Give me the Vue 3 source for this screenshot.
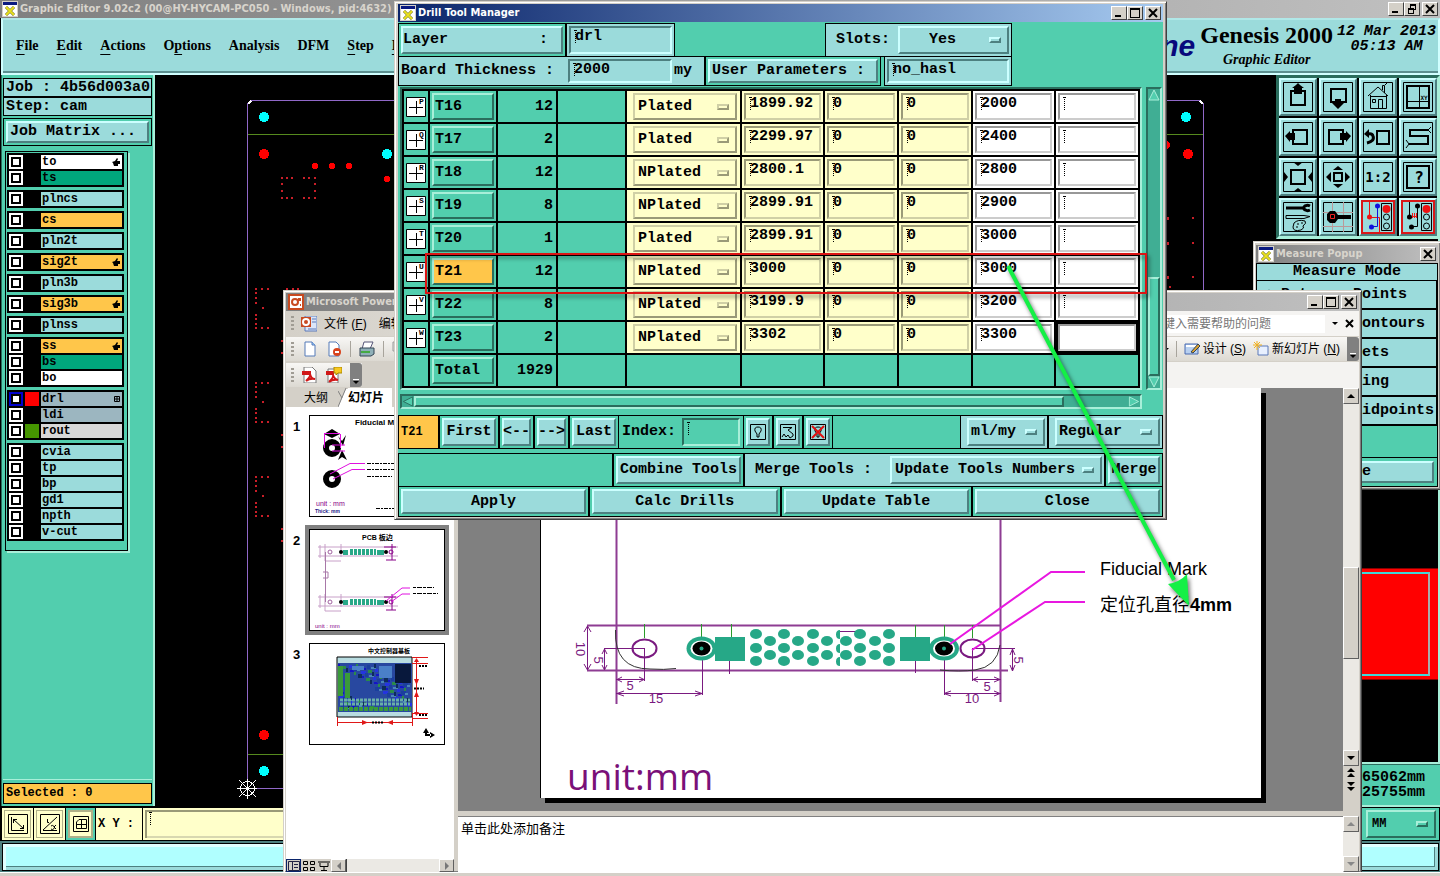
<script setup>
import { ref } from 'vue'

const menus = [
  { pre: '', key: 'F', post: 'ile' },
  { pre: '', key: 'E', post: 'dit' },
  { pre: '', key: 'A', post: 'ctions' },
  { pre: 'O', key: 'p', post: 'tions' },
  { pre: 'Analysis', key: '', post: '' },
  { pre: 'DFM', key: '', post: '' },
  { pre: '', key: 'S', post: 'tep' },
  { pre: '', key: 'H', post: 'elp' }
]

const groups = [
  [{ n: 'to', c: 'white', hand: true }, { n: 'ts', c: 'green' }],
  [{ n: 'plncs' }],
  [{ n: 'cs', c: 'amber' }],
  [{ n: 'pln2t' }],
  [{ n: 'sig2t', c: 'amber', hand: true }],
  [{ n: 'pln3b' }],
  [{ n: 'sig3b', c: 'amber', hand: true }],
  [{ n: 'plnss' }],
  [{ n: 'ss', c: 'amber', hand: true }, { n: 'bs', c: 'green' }, { n: 'bo', c: 'white' }],
  [{ n: 'drl', c: 'steel', sw: 'red', on: true, grid: true }, { n: 'ldi', c: 'steel' }, { n: 'rout', c: 'grey', sw: 'leaf' }],
  [{ n: 'cvia' }, { n: 'tp' }, { n: 'bp' }, { n: 'gd1' }, { n: 'npth' }, { n: 'v-cut' }]
]

const rows = ref([
  { s: 'P', t: 'T16', n: 12, type: 'Plated', v: '1899.92', d: '2000' },
  { s: 'Q', t: 'T17', n: 2, type: 'Plated', v: '2299.97', d: '2400' },
  { s: 'R', t: 'T18', n: 12, type: 'NPlated', v: '2800.1', d: '2800' },
  { s: 'S', t: 'T19', n: 8, type: 'NPlated', v: '2899.91', d: '2900' },
  { s: 'T', t: 'T20', n: 1, type: 'Plated', v: '2899.91', d: '3000' },
  { s: 'U', t: 'T21', n: 12, type: 'NPlated', v: '3000', d: '3000', on: true },
  { s: 'V', t: 'T22', n: 8, type: 'NPlated', v: '3199.9', d: '3200' },
  { s: 'W', t: 'T23', n: 2, type: 'NPlated', v: '3302', d: '3300', last: true }
])

const K = '#000'
const dot = (x, y, r) => `M${x - r} ${y}A${r} ${r} 0 1 0 ${x + r} ${y}A${r} ${r} 0 1 0 ${x - r} ${y}`
const lights = [
  { d: 'M18.500 1.500H28.500V28.500H18.500Z' + dot(23.5, 15, 3) + dot(23.5, 24, 3), s: K, w: 1 },
  { d: dot(23.5, 7, 4), f: '#e11' }
]
const tools = [
  { n: 'Pan up', p: [{ d: 'M8 9H22V23H8Z', s: K, w: 2 }, { d: 'M9 6L13 3L15 1L17 3L21 6H19V12H11V6Z', f: K }] },
  { n: 'Pan down', p: [{ d: 'M8 7H23V20H8Z', s: K, w: 2 }, { d: 'M12 17H18V21H21L15 27L9 21H12Z', f: K }] },
  { n: 'Home', p: [{ d: 'M5 14L15 5L25 14M7.500 13V26.500H23.500V13M7 14.500H24M9.500 17.500H12.500V20.500H9.500ZM15.500 26V17.500H19.500V26M19.500 8V3.500H21.500V11M22 3L24 1', s: K, w: 1 }] },
  { n: 'Area', p: [{ d: 'M4 4H26V26H4Z', s: K, w: 2 }, { d: 'M16.5 4V26M4 19.5H26', s: K, w: 1 }], t: 'XY', x: 21, y: 18, z: 6 },
  { n: 'Pan left', p: [{ d: 'M10 8H24V22H10Z', s: K, w: 2 }, { d: 'M2 14L7 9V11H12V18H7V20Z', f: K }] },
  { n: 'Pan right', p: [{ d: 'M6 8H20V22H6Z', s: K, w: 2 }, { d: 'M28 14L23 9V11H17V18H23V20Z', f: K }] },
  { n: 'Previous zoom', p: [{ d: 'M14 9H26V22H14Z', s: K, w: 2 }, { d: 'M4 21Q12 19 10 14Q9 11 5 12', s: K, w: 3 }, { d: 'M1 12L6 7V16Z', f: K }] },
  { n: 'Snake', p: [{ d: 'M25 8H7V14H25V22H6', s: K, w: 2 }, { d: 'M25 8L28 5M25 8L28 11M6 22L3 18M6 22L3 26', s: K, w: 1 }] },
  { n: 'Zoom in', p: [{ d: 'M8 8H22V22H8Z', s: K, w: 2 }, { d: 'M10 0H20L15 4ZM10 30H20L15 26ZM1 10V20L5 15ZM29 10V20L25 15Z', f: K }] },
  { n: 'Zoom out', p: [{ d: 'M11 11H19V19H11Z', s: K, w: 2 }, { d: 'M10 8H20L15 4ZM10 22H20L15 26ZM8 10V20L3 15ZM22 10V20L27 15Z', f: K }] },
  { n: 'Scale', p: [], t: '1:2', x: 15, y: 20, z: 14 },
  { n: 'Query', p: [{ d: 'M4 4H26V26H4Z', s: K, w: 2 }], t: '?', x: 16, y: 21, z: 16 },
  { n: 'Options', p: [{ d: 'M3 6H19M27 4Q23 2 20 6Q23 10 27 8', s: K, w: 3 }, { d: 'M3 13.500H21L27 14.500L21 16.500H3Z', s: K, w: 1 }, { d: 'M11 21Q15 17 22 19Q24 21 20 24Q22 26 18 28Q10 30 10 25ZM14 22H16M18 21H20M13 25H15', s: K, w: 1 }] },
  { n: 'Feature', p: [{ d: 'M0 10.5H30M9.5 0V30M20.5 0V30M0 24.5H30', s: '#b99', w: 1 }, { d: 'M4 12L7 9H12L15 13H28V17H15L12 21H7L4 18Z', f: K }, { d: 'M7.500 12.500H11.500V16.500H7.500Z', s: '#e22', w: 1 }] },
  { n: 'Net colours', red: true, p: [{ d: 'M6.5 0V15.500H16.500V30', s: '#e11', w: 1 }, { d: 'M14.5 5V24.500H8', s: '#11d', w: 1 }, { d: dot(6.5, 15, 2.5), f: '#e11' }, { d: dot(14.5, 4, 2.5) + dot(8.5, 25, 2.5), f: '#11d' }, ...lights] },
  { n: 'Net compare', red: true, p: [{ d: 'M6.5 0V15M14.5 4V24.500H8M6 15.500H9', s: K, w: 1 }, { d: 'M9.500 16V11M11.500 16V11M13.500 16V11M9 14.500H14', s: '#e11', w: 1 }, { d: dot(6.5, 15, 2.5) + dot(14.5, 4, 2.5) + dot(8.5, 25, 2.5), f: K }, ...lights] }
]

const modes = ['Between Points', 'Between Contours', 'Between Nets', 'Annular Ring', 'Between Midpoints']

const padOffsets = [[256, 0], [262, 0], [268, 0], [256, 4], [256, 9], [256, 14], [263, 19], [256, 26], [256, 30], [256, 35], [256, 39], [262, 39], [268, 39], [282, 52], [282, 64]]
const pads = [289, 383, 477].flatMap(y => padOffsets.map(p => [p[0], y + p[1]])).concat(
  [282, 287, 292, 304, 309, 315].flatMap(x => [[x, 178], [x, 198]]),
  [[282, 184], [282, 191], [315, 184], [315, 191], [287, 289], [293, 289], [298, 289]]
)

const holes = [634, 648, 661].flatMap(y => [756, 784, 813, 860, 889].map(x => [x, y])).concat(
  [641, 655].flatMap(y => [770, 798, 827, 846, 875].map(x => [x, y]))
)

const comps = Array.from({ length: 90 }, (_, i) => ({
  x: 28 + (i * 37) % 70,
  y: 20 + (i * 23) % 44,
  w: 2 + (i * 7) % 4,
  h: 2 + (i * 5) % 3,
  c: ['#1414c8', '#1b3f9e', '#2a8a4a', '#4a86b8', '#0d2c5c', '#2434e0'][i % 6]
}))
</script>

<template>
  <div class="desktop">
    <svg class="defs" aria-hidden="true">
      <symbol id="logo-x" viewBox="0 0 16 16">
        <path d="M0 0H16V16H0Z" fill="#d4d0c8" /><path d="M1 1H15V15H1Z" fill="#fff" />
        <path d="M1 1H15V4H1Z" fill="#0a1a80" /><path d="M4 6L12 14M12 6L4 14" stroke="#6a6a20" stroke-width="3" />
        <path d="M4 6L12 14M12 6L4 14" stroke="#e8e020" stroke-width="2" />
      </symbol>
      <symbol id="w-min" viewBox="0 0 12 10"><path d="M2 7H8V9H2Z" /></symbol>
      <symbol id="w-max" viewBox="0 0 12 10"><path d="M1 0H11V10H1ZM2 2V9H10V2Z" fill-rule="evenodd" /></symbol>
      <symbol id="w-res" viewBox="0 0 12 10"><path d="M4 0H10V6H8V10H2V4H4ZM5 2V4H8V5H9V2ZM3 6V9H7V6Z" fill-rule="evenodd" /></symbol>
      <symbol id="w-close" viewBox="0 0 12 10"><path d="M2 1L10 9M10 1L2 9" stroke="#000" stroke-width="2" /></symbol>
    </svg>

    <!-- Graphic editor -->
    <main class="editor">
      <header class="bar idle">
        <svg class="logo"><use href="#logo-x" /></svg>
        <h1>Graphic Editor 9.02c2 (00@HY-HYCAM-PC050 - Windows, pid:4632)</h1>
        <span class="wb">
          <button aria-label="Minimize editor"><svg><use href="#w-min" /></svg></button>
          <button aria-label="Restore editor"><svg><use href="#w-res" /></svg></button>
          <button class="gap" aria-label="Close editor"><svg><use href="#w-close" /></svg></button>
        </span>
      </header>

      <div class="head">
        <nav class="menu">
          <button v-for="m in menus" :key="m.pre + m.key + m.post">{{ m.pre }}<u v-if="m.key">{{ m.key }}</u>{{ m.post }}</button>
        </nav>
        <span class="brand">Frontline</span>
        <div class="product"><strong>Genesis 2000</strong><em>Graphic Editor</em></div>
        <div class="date">12 Mar 2013<br>05:13 AM</div>
      </div>

      <div class="work">
        <aside class="side">
          <div class="info">Job : 4b56d003a0</div>
          <div class="info">Step: cam</div>
          <div class="frame"><button class="btn wide">Job Matrix ...</button></div>
          <div class="layers">
            <div v-for="(g, i) in groups" :key="i" class="group">
              <label v-for="l in g" :key="l.n" class="layer">
                <input type="checkbox" :class="{ on: l.on }">
                <span class="swatch" :class="l.sw"></span>
                <span class="name" :class="l.c">{{ l.n }}
                  <svg v-if="l.hand" width="8" height="8" viewBox="0 0 8 8"><path d="M0 4L3 3L5 0L6 1L5 3H8V6H6V8H2L1 5Z" /></svg>
                  <svg v-if="l.grid" width="6" height="6" viewBox="0 0 6 6"><path d="M.5.5H5.500V5.500H.5ZM3 0V6M0 3H6" fill="none" stroke="#000" /></svg>
                </span>
              </label>
            </div>
          </div>
          <div class="selected">Selected : 0</div>
        </aside>

        <div class="canvas">
          <svg viewBox="155 75 1121 732" preserveAspectRatio="xMinYMin slice" shape-rendering="crispEdges">
            <path d="M247.5 788V104L251 100.500H1200L1203.500 104V788.500H247" fill="none" stroke="#9068c8" />
            <path d="M248 104L251 101M1200 101L1203 104" stroke="#fff" stroke-width="2" />
            <path d="M248 134.500H1203M248 754.500H1203" stroke="#568a1e" />
            <g fill="#0ff"><circle cx="264" cy="117" r="5" /><circle cx="387" cy="154" r="5" /><circle cx="264" cy="771" r="5" /><circle cx="1186" cy="117" r="5" /></g>
            <g fill="#f00">
              <circle cx="264" cy="154" r="5" /><circle cx="264" cy="735" r="5" /><circle cx="1188" cy="154" r="5" /><circle cx="1166" cy="145" r="4" />
              <circle cx="315" cy="166" r="3" /><circle cx="332" cy="166" r="3" /><circle cx="349" cy="166" r="3" /><circle cx="387" cy="179" r="3" />
            </g>
            <g fill="#c81e28">
              <rect v-for="(p, i) in pads" :key="i" :x="p[0] - 1" :y="p[1] - 1" width="2" height="2" />
              <rect v-for="y in [217, 242, 276]" :key="y" x="1192" :y="y" width="2" height="2" />
              <rect v-for="y in [217, 242, 276]" :key="'b' + y" x="1166" :y="y" width="3" height="3" />
              <rect x="1169" y="286" width="2" height="2" />
            </g>
            <g fill="none" stroke="#fff"><circle cx="247.500" cy="788.500" r="7" /><path d="M237 788.500H257M247.500 779V799M239 780L256 797M256 780L239 797" /></g>
          </svg>
        </div>

        <aside class="right">
          <div class="tools">
            <button v-for="t in tools" :key="t.n" class="tool" :class="{ alert: t.red }" :aria-label="t.n">
              <svg viewBox="0 0 30 30" width="30" height="30">
                <path d="M.5 .5H29.500V29.500H.5Z" fill="none" :stroke="t.red ? 'none' : '#000'" />
                <path v-for="(p, i) in t.p" :key="i" :d="p.d" :fill="p.f || 'none'" :stroke="p.s || 'none'" :stroke-width="p.w || 0" />
                <text v-if="t.t" :x="t.x" :y="t.y" :font-size="t.z" text-anchor="middle">{{ t.t }}</text>
              </svg>
            </button>
          </div>
          <div class="overview"><div class="red-box"><i></i></div></div>
          <div class="coords"><span>X: 0.165062mm</span><span>Y: 0.225755mm</span></div>
        </aside>
      </div>

      <div class="entry">
        <button class="cream" aria-label="Vector mode"><svg width="20" height="20" viewBox="0 0 20 20"><path d="M.5.5H19.500V19.500H.5ZM3.500 3V16.500H16M5 5L16 15M5.500 9V5.500H9M15.500 11V14.500H12" /></svg></button>
        <button class="cream" aria-label="Angle mode"><svg width="20" height="20" viewBox="0 0 20 20"><path d="M.5.5H19.500V19.500H.5ZM3 16L17 3M3 16.500H17M7.500 5V8.500H9M11 12A2 2 0 1 1 11 15M16 11L14 13L16 15" /></svg></button>
        <button class="cream sel" aria-label="Grid snap"><svg width="16" height="16" viewBox="0 0 16 16"><path d="M.5.5H15.500V15.500H.5ZM3.500 6L6 3.500H13.500V12.500H3.500ZM8.500 3V13M3 8.500H13" /></svg></button>
        <label class="xy" for="xy">X Y :</label>
        <div class="xyin"><i class="beam"></i><input id="xy" type="text"></div>
        <div class="unit"><div class="opt greenopt"><select aria-label="Units"><option>MM</option></select><i></i></div></div>
      </div>
      <div class="message"><div></div></div>
      <footer class="strip"></footer>
    </main>

    <!-- Measure popup -->
    <section class="win measure">
      <header class="bar idle">
        <svg class="logo"><use href="#logo-x" /></svg><h2>Measure Popup</h2>
        <span class="wb"><button aria-label="Close measure"><svg><use href="#w-close" /></svg></button></span>
      </header>
      <div class="mbody">
        <h3>Measure Mode</h3>
        <label v-for="m in modes" :key="m"><input type="radio" name="mode">{{ m }}</label>
        <div class="mclose"><div class="frame"><button class="btn">Close</button></div></div>
      </div>
    </section>

    <!-- Presentation window -->
    <section class="win ppt">
      <header class="bar idle">
        <svg class="plogo" viewBox="0 0 16 16"><path d="M0 0H16V16H0Z" fill="#c84a20" /><path d="M2 2H14V14H2Z" fill="#fff" /><circle cx="7" cy="8" r="3" fill="none" stroke="#c84a20" stroke-width="2" /><path d="M10 4H13V7H10ZM12 10H13V12H12Z" fill="#c84a20" /></svg>
        <h2>Microsoft PowerPoint</h2>
        <span class="wb">
          <button aria-label="Minimize presentation"><svg><use href="#w-min" /></svg></button>
          <button aria-label="Maximize presentation"><svg><use href="#w-max" /></svg></button>
          <button class="gap" aria-label="Close presentation"><svg><use href="#w-close" /></svg></button>
        </span>
      </header>
      <div class="pmenu">
        <i class="grip"></i>
        <svg class="plogo" viewBox="0 0 16 16"><path d="M4 0H16V15H4Z" fill="#dce6f8" stroke="#5a78b8" /><path d="M11 3H15M11 6H15M7 13H15" stroke="#5a78b8" /><path d="M0 1H10V11H0Z" fill="#c84a20" /><circle cx="5" cy="6" r="3" fill="none" stroke="#fff" stroke-width="2" /></svg>
        <button>文件 (<u>F</u>)</button><button>编辑 (<u>E</u>)</button>
        <input class="help" type="text" placeholder="键入需要帮助的问题" aria-label="帮助">
        <span class="drop"></span>
        <button class="x" aria-label="Close file"><svg width="9" height="9" viewBox="0 0 9 9"><path d="M1 1L8 8M8 1L1 8" stroke="#000" stroke-width="2" /></svg></button>
      </div>
      <div class="ptools">
        <div class="strip1">
          <i class="grip"></i>
          <button aria-label="New"><svg width="16" height="16" viewBox="0 0 16 16"><path d="M3 1H10L13 4V15H3Z" fill="#fff" stroke="#557ab8" /><path d="M10 1V4H13" fill="#9cf" stroke="#557ab8" /></svg></button>
          <button aria-label="Permission"><svg width="16" height="16" viewBox="0 0 16 16"><path d="M3 1H10L13 4V15H3Z" fill="#fff" stroke="#557ab8" /><circle cx="11" cy="11" r="4" fill="#d8431c" /><path d="M9 11H13" stroke="#fff" stroke-width="2" /></svg></button>
          <i class="sep"></i>
          <button aria-label="Print"><svg width="16" height="16" viewBox="0 0 16 16"><path d="M5 1H14L11 8H3Z" fill="#fff" stroke="#557" /><path d="M1 7H15V13L12 15H1Z" fill="#8fb0b8" stroke="#345" /><path d="M2 11H11" stroke="#4a4" stroke-width="2" /></svg></button>
          <i class="sep"></i>
          <button aria-label="Copy"><svg width="16" height="16" viewBox="0 0 16 16"><path d="M1 1H8V10H1ZM6 5H14V15H6Z" fill="#ddd" stroke="#999" /><path d="M8 8H12M8 10H12M8 12H12" stroke="#aaa" /></svg></button>
        </div>
        <div class="strip1 end">
          <span class="drop"></span><i class="sep"></i>
          <button><svg width="16" height="16" viewBox="0 0 16 16"><path d="M1 3H14V13H1Z" fill="#b8d0f0" stroke="#4a6ab0" /><path d="M2 4H13V6H2Z" fill="#fff" /><path d="M7 11L14 3L16 5L9 12Z" fill="#d8a030" stroke="#345" /></svg><span>设计 (<u>S</u>)</span></button>
          <button><svg width="16" height="16" viewBox="0 0 16 16"><path d="M5 5H15V14H5Z" fill="#e8f0ff" stroke="#5a78b8" /><path d="M4 0V9M0 4H9M1 1L7 7M7 1L1 7" stroke="#f0b020" /></svg><span>新幻灯片 (<u>N</u>)</span></button>
          <i class="more"></i>
        </div>
      </div>
      <div class="ptools second">
        <div class="strip1">
          <i class="grip"></i>
          <button aria-label="PDF"><svg width="16" height="16" viewBox="0 0 16 16"><path d="M2 0H10L14 4V16H2Z" fill="#fff" stroke="#777" /><path d="M0 4H9V8H0Z" fill="#d01818" /><path d="M4 14Q9 9 8 7Q9 12 13 12Q8 11 4 14" fill="none" stroke="#d01818" stroke-width="2" /></svg></button>
          <button aria-label="PDF review"><svg width="16" height="16" viewBox="0 0 16 16"><path d="M2 2H12V16H2Z" fill="#fff" stroke="#777" /><path d="M0 4H8V8H0Z" fill="#d01818" /><path d="M3 15Q8 10 7 8Q8 12 12 13Q7 12 3 15" fill="none" stroke="#d01818" stroke-width="2" /><path d="M8 0H16V6H12L10 8V6H8Z" fill="#f8c820" stroke="#a80" /></svg></button>
          <i class="more"></i>
        </div>
      </div>

      <div class="pbody">
        <div class="outline">
          <div class="tabs"><button>大纲</button><svg width="10" height="19" viewBox="0 0 10 19"><path d="M10 0V19H0L8 1H10Z" fill="#fff" /><path d="M0 19L8 0M0 3L4 10" stroke="#808080" fill="none" /></svg><button class="act">幻灯片</button></div>
          <ol class="thumbs">
            <li><b>1</b>
              <div class="thumb"><svg viewBox="0 0 134 100">
                <text x="45" y="9" font-size="8" font-weight="bold">Fiducial  Mark</text>
                <circle cx="22" cy="32" r="6" fill="none" stroke="#000" stroke-width="6" /><circle cx="22" cy="63" r="6" fill="none" stroke="#000" stroke-width="6" />
                <path d="M14 18L22 13L30 18L22 22ZM28 20L32 25L36 19L33 30ZM32 34L37 44L32 41L28 44Z" />
                <path d="M14.500 18V32M30.500 18V32M14 17.500H30M22 29H35M22 35H35M20 58L40 47.500H55M23 63L42 53.500H55" stroke="#e010e0" fill="none" />
                <path d="M57 47.500H84M57 53.500H84M57 60.500H82M66 92.500H84" stroke="#000" stroke-dasharray="4 1 2 1" />
                <text x="6" y="90" font-size="7" fill="#808">unit : mm</text><text x="5" y="97" font-size="5" font-weight="bold" fill="#228">Thick: mm</text>
              </svg></div></li>
            <li class="cur"><b>2</b>
              <div class="thumb"><svg viewBox="0 0 134 100">
                <text x="52" y="10" font-size="7" font-weight="bold">PCB 板边</text>
                <g v-for="y in [22, 72]" :key="y">
                  <path :d="`M8 ${y - 5}H88M8 ${y + 4}H88M10 ${y - 7}V${y + 6}M15 ${y - 8}V${y + 9}M31 ${y - 8}V${y + 5}M15 ${y + 9}H31`" stroke="#c8a0c8" fill="none" />
                  <circle cx="20" :cy="y" r="2" stroke="#a060a0" fill="none" /><circle cx="31" :cy="y" r="2" /><circle cx="76" :cy="y" r="2" />
                  <path :d="`M33 ${y - 2}H38V${y + 3}H33ZM67 ${y - 2}H74V${y + 3}H67Z`" fill="#28a888" />
                  <path :d="`M40 ${y}H66`" stroke="#28a888" stroke-width="6" stroke-dasharray="3 1" />
                  <circle cx="81" :cy="y" r="2" fill="none" stroke="#808" /><path :d="`M74 ${y - 5}H86M76 ${y + 8}H86M82 ${y - 8}V${y + 8}`" stroke="#808" />
                </g>
                <path d="M15.500 22V72M13 42H18V48H13" stroke="#a878a8" fill="none" />
                <path d="M76 71L92 58H100M81 72L92 64H100" stroke="#e010e0" fill="none" />
                <path d="M103 57.500H124M103 63.500H128" stroke="#000" stroke-dasharray="3 1 5 1" />
                <text x="5" y="98" font-size="6" fill="#808">unit : mm</text>
              </svg></div></li>
            <li><b>3</b>
              <div class="thumb"><svg viewBox="0 0 134 100">
                <text x="58" y="9" font-size="6" font-weight="bold">中文控制器基板</text>
                <path d="M27 13H102V73H27Z" fill="#b8dce0" stroke="#000" /><path d="M28 19H102V68H28Z" fill="#2848a0" />
                <rect v-for="(c, i) in comps" :key="i" :x="c.x" :y="c.y" :width="c.w" :height="c.h" :fill="c.c" />
                <path d="M28 22H33V52H28ZM35 29H40V54H35Z" fill="#3a9a3a" /><path d="M30 56H100M30 60H100" stroke="#6ab0a8" stroke-width="3" stroke-dasharray="3 1" /><path d="M29 65H101" stroke="#3a9a3a" stroke-width="4" stroke-dasharray="4 1" />
                <path d="M85 20H101V39H85Z" fill="#08183c" /><path d="M42 22H54V26H42ZM69 22H82V34H69Z" fill="#4a80c8" />
                <path d="M27.500 73V82M102.500 70V82M28 78.500H102M106.500 16V68M102 13.500H118M102 19.500H118M102 69.500H118M102 74.500H118" stroke="#e01818" />
                <path d="M58 78.500L52 76V81ZM77 78.500L83 76V81ZM106.500 41L104 35H109ZM106.500 47L104 53H109ZM106.500 72L104 68H109ZM106.500 14L104 18H109Z" fill="#e01818" />
                <path d="M62 78.500H74M104 44.500H114M109 22H118M109 71H117" stroke="#000" stroke-width="2" stroke-dasharray="2 1" />
                <path d="M116 84L113 89H119ZM125 91L120 88V94ZM115 89H117V90H121V92H115Z" />
              </svg></div></li>
          </ol>
          <div class="views">
            <button class="on" aria-label="Normal view"><svg width="12" height="10" viewBox="0 0 12 10"><path d="M.5.5H11.500V9.500H.5ZM4.500 0V10M6 3.500H10M6 6.500H10" fill="none" stroke="#224" /></svg></button>
            <button aria-label="Slide sorter"><svg width="12" height="10" viewBox="0 0 12 10"><path d="M.5.5H4.500V3.500H.5ZM7.500.5H11.500V3.500H7.500ZM.5 6.500H4.500V9.500H.5ZM7.500 6.500H11.500V9.500H7.500Z" fill="none" stroke="#000" /></svg></button>
            <button aria-label="Slide show"><svg width="12" height="10" viewBox="0 0 12 10"><path d="M0 1H12M2 2V5.500H10V2M6 6V10M3 9.500H9" fill="none" stroke="#000" /></svg></button>
            <button class="sb left" aria-label="Scroll left"></button><i class="trk"></i><button class="sb rightb" aria-label="Scroll right"></button>
          </div>
        </div>

        <div class="stage">
          <div class="slidearea">
            <div class="slidewrap">
              <div class="slide">
                <svg viewBox="541 388 720 410">
                  <g fill="none" stroke="#7a1a80">
                    <path d="M616.500 388V704M1000.500 388V702M587 625.500H1000M587 670.500H1008" stroke-width="2" stroke-opacity=".85" />
                    <path d="M587.500 626V670M604.500 649V670M604 648.500H645M644.500 648V681M616 679.500H645M616 693.500H702M702.500 655V695M729.500 660V674M915.500 660V673M944.500 660V695M944 693.500H1001M972.500 648V681M972 679.500H1001M972 648.500H1015M1012.500 649V671M840 631.500H862" stroke-width="1" />
                    <path d="M584 632L587.500 626L591 632M584 664L587.500 670L591 664M602 654L604.500 649L607 654M602 665L604.500 670L607 665M622 677L617 679.500L622 682M639 677L644 679.500L639 682M624 691L617 693.500L624 696M695 691L702 693.500L695 696M951 691L944 693.500L951 696M994 691L1000 693.500L994 696M978 677L973 679.500L978 682M994 677L1000 679.500L994 682M1010 655L1012.500 649L1015 655M1010 665L1012.500 671L1015 665" />
                    <ellipse cx="644.500" cy="648.500" rx="12" ry="9" stroke-width="2" /><ellipse cx="972.500" cy="648.500" rx="12" ry="9" stroke-width="2" />
                  </g>
                  <path d="M615.500 630Q614 669 650 669Q664 670 676 668.500M1000 645Q997 667 975 670Q960 672 940 670" fill="none" stroke="#333" />
                  <path d="M644.500 624V638M701.500 624V638M731.500 624V638M915.500 625V638M944.500 625V638M972.500 625V638" stroke="#2a9a2a" />
                  <g fill="#26a887">
                    <path d="M715 637H745V661H715ZM900 637H930V661H900ZM840 630Q836 630 836 634.500Q836 639 840 639ZM840 644Q836 644 836 648.500Q836 653 840 653ZM840 657Q836 657 836 661.500Q836 666 840 666Z" />
                    <ellipse v-for="(h, i) in holes" :key="i" :cx="h[0]" :cy="h[1]" rx="6" ry="5" />
                  </g>
                  <g v-for="x in [701.5, 944]" :key="x">
                    <ellipse :cx="x" cy="648.500" rx="15" ry="12" fill="#26a887" /><ellipse :cx="x" cy="648.500" rx="11" ry="8" fill="#fff" />
                    <ellipse :cx="x" cy="648.500" rx="9" ry="7" fill="#000" /><circle :cx="x" cy="648.500" r="2" fill="#26a887" />
                  </g>
                  <g font-size="13" fill="#7a1a80" text-anchor="middle">
                    <text x="630" y="690">5</text><text x="656" y="703">15</text><text x="972" y="703">10</text><text x="987" y="691">5</text>
                    <text transform="translate(576 649) rotate(90)">10</text><text transform="translate(594 660) rotate(90)">5</text><text transform="translate(1014 660) rotate(90)">5</text>
                  </g>
                  <path d="M950 644L1051 572H1085M972 650L1045 602H1085" fill="none" stroke="#e818e0" stroke-width="2" />
                  <g font-size="18"><text x="1100" y="575" class="keep">Fiducial  Mark</text><text x="1100" y="611">定位孔直径<tspan font-weight="bold">4mm</tspan></text></g>
                  <text class="unitmm" x="567" y="790" font-size="37" fill="#7a1078">unit:mm</text>
                </svg>
              </div>
            </div>
            <div class="vscroll">
              <button class="sb up" aria-label="Scroll up"></button>
              <div class="track"><div class="thumbbar"></div></div>
              <button class="sb down" aria-label="Scroll down"></button>
              <button class="sb dbl" aria-label="Previous slide"><svg width="10" height="10" viewBox="0 0 10 10"><path d="M5 0L9 4H1ZM5 5L9 9H1Z" /></svg></button>
              <button class="sb dbl" aria-label="Next slide"><svg width="10" height="10" viewBox="0 0 10 10"><path d="M1 0H9L5 4ZM1 5H9L5 9Z" /></svg></button>
            </div>
          </div>
          <div class="notes">
            <textarea aria-label="Notes">单击此处添加备注</textarea>
            <div class="vscroll"><button class="sb up dim" aria-label="Notes up"></button><div class="track"></div><button class="sb down dim" aria-label="Notes down"></button></div>
          </div>
        </div>
      </div>
    </section>

    <!-- Drill tool manager -->
    <section class="win drill">
      <header class="bar live">
        <svg class="logo"><use href="#logo-x" /></svg><h2>Drill Tool Manager</h2>
        <span class="wb">
          <button aria-label="Minimize drill"><svg><use href="#w-min" /></svg></button>
          <button aria-label="Maximize drill"><svg><use href="#w-max" /></svg></button>
          <button class="gap" aria-label="Close drill"><svg><use href="#w-close" /></svg></button>
        </span>
      </header>
      <div class="dbody">
        <div class="drow r1">
          <div class="cell w168"><button class="btn spread"><span>Layer</span><span>:</span></button></div>
          <div class="cell aqua w109"><div class="inp"><i class="beam"></i><input aria-label="Layer" value="drl"></div></div>
          <span class="space151"></span>
          <div class="cell aqua w187"><label for="slots">Slots:</label><div class="opt aquaopt yes"><select id="slots"><option>Yes</option></select><i></i></div></div>
        </div>
        <div class="drow r2">
          <div class="cell aqua w307"><label for="thick">Board Thickness :</label><div class="inp w104"><i class="beam"></i><input id="thick" value="2000"></div><span>my</span></div>
          <div class="cell w176"><button class="btn wide">User Parameters :</button></div>
          <span class="space3"></span>
          <div class="cell aqua w128"><div class="inp"><i class="beam"></i><input aria-label="User parameters" value="no_hasl"></div></div>
        </div>

        <div class="sheet">
          <div class="tframe">
            <table>
              <colgroup><col v-for="(c, i) in 10" :key="i" :class="'c' + i"></colgroup>
              <tbody>
                <tr v-for="r in rows" :key="r.t">
                  <td class="sym"><svg width="20" height="20" viewBox="0 0 20 20"><path d="M.5.5H19.500V19.500H.5Z" fill="#fff" stroke="#000" /><path d="M3 10.500H17M10.500 4V17" stroke="#000" /><text x="13" y="7" font-size="8">{{ r.s }}</text></svg></td>
                  <td><button class="gbtn" :class="{ hot: r.on }">{{ r.t }}</button></td>
                  <td class="num">{{ r.n }}</td>
                  <td></td>
                  <td class="cr"><div class="opt creamopt"><select :aria-label="r.t + ' type'"><option>{{ r.type }}</option></select><i></i></div></td>
                  <td class="cr"><div class="inp"><i class="beam"></i><input v-model="r.v" :aria-label="r.t + ' finish'"></div></td>
                  <td class="cr"><div class="inp"><i class="beam"></i><input value="0" :aria-label="r.t + ' plus'"></div></td>
                  <td class="cr"><div class="inp"><i class="beam"></i><input value="0" :aria-label="r.t + ' minus'"></div></td>
                  <td class="wh"><div class="inp"><i class="beam"></i><input v-model="r.d" :aria-label="r.t + ' drill'"></div></td>
                  <td class="wh" :class="{ focus: r.last }"><div class="inp"><i v-if="!r.last" class="beam"></i><input :aria-label="r.t + ' designator'"></div></td>
                </tr>
                <tr>
                  <td></td><td><button class="gbtn">Total</button></td><td class="num">1929</td>
                  <td></td><td></td><td></td><td></td><td></td><td></td><td></td>
                </tr>
              </tbody>
            </table>
          </div>
          <div class="mvs">
            <svg width="12" height="12" viewBox="0 0 12 12"><path d="M6 1L11 11H1Z" fill="#52ceae" stroke="#a8efd9" /></svg>
            <div class="mtrack"><div class="mthumb"></div></div>
            <svg width="12" height="12" viewBox="0 0 12 12"><path d="M6 11L1 1H11Z" fill="#52ceae" stroke="#a8efd9" /></svg>
          </div>
          <div class="mhs">
            <svg width="12" height="11" viewBox="0 0 12 12"><path d="M1 6L11 1V11Z" fill="#52ceae" stroke="#2a6d5d" /></svg>
            <div class="htrack"><div class="hthumb"></div></div>
            <svg width="12" height="11" viewBox="0 0 12 12"><path d="M11 6L1 1V11Z" fill="#52ceae" stroke="#a8efd9" /></svg>
          </div>
        </div>

        <div class="drow nav">
          <div class="cell amber w41">T21</div>
          <div class="cell w60"><button class="btn">First</button></div>
          <div class="cell w35"><button class="btn">&lt;--</button></div>
          <div class="cell w35"><button class="btn">--&gt;</button></div>
          <div class="cell w50"><button class="btn">Last</button></div>
          <div class="cell idx"><label for="idx">Index:</label><div class="inp ginp"><i class="beam"></i><input id="idx"></div></div>
          <div class="cell w30"><button class="btn" aria-label="Highlight"><svg width="16" height="16" viewBox="0 0 16 16"><path d="M.5.5H15.500V15.500H.5ZM8 3Q12 3 11 7L9 10V13H7V10L5 7Q4 3 8 3" /></svg></button></div>
          <div class="cell w30"><button class="btn" aria-label="Select"><svg width="16" height="16" viewBox="0 0 16 16"><path d="M.5.5H15.500V15.500H.5ZM3 3.500H12L8 6L13 10V12M2 13L4 10L6 13L8 11L10 14L13 12" /></svg></button></div>
          <div class="cell w30"><button class="btn" aria-label="Clear"><svg width="16" height="16" viewBox="0 0 16 16"><path d="M.5.5H15.500V15.500H.5ZM5 7Q4 3 8 3Q12 3 11 7L9 10V13H7V10Z" /><path d="M2 2L14 14M14 2L2 14" stroke="#e01010" stroke-width="2" /></svg></button></div>
          <div class="cell grow"></div>
          <div class="cell aqua w88 po"><div class="opt aquaopt"><select aria-label="Tool units"><option>ml/my</option></select><i></i></div></div>
          <div class="cell aqua w115 po"><div class="opt aquaopt"><select aria-label="Mode"><option>Regular</option></select><i></i></div></div>
        </div>

        <div class="drow merge">
          <div class="cell grow"></div>
          <div class="cell w130"><button class="btn">Combine Tools</button></div>
          <div class="cell aqua w362"><label for="merge">Merge Tools :</label><div class="opt aquaopt upd"><select id="merge"><option>Update Tools Numbers</option></select><i></i></div></div>
          <div class="cell w58"><button class="btn">Merge</button></div>
        </div>
        <div class="drow acts">
          <div v-for="a in ['Apply', 'Calc Drills', 'Update Table', 'Close']" :key="a" class="cell grow"><button class="btn">{{ a }}</button></div>
        </div>
      </div>
    </section>

    <!-- Callout marks over the windows -->
    <svg class="marks" viewBox="0 0 1440 876" preserveAspectRatio="xMinYMin meet" aria-hidden="true">
      <path class="box" d="M426 254H1146V293H426Z" fill="none" stroke="#dc1414" stroke-width="2" />
      <g class="arrow"><path d="M1008 266L1174 580" stroke="#14f046" stroke-width="4" /><path d="M1189 606L1168 584Q1180 582 1187 574Z" fill="#14f046" /></g>
    </svg>
  </div>
</template>

<style>
html, body { height: 100%; overflow: hidden; background: #000; }
</style>

<style scoped>
* { box-sizing: border-box; }
.desktop { position: relative; height: 100vh; overflow: hidden; font: bold 15px/18px "Liberation Mono", monospace; color: #000; }
.defs { position: absolute; width: 0; height: 0; }
button, input, select, textarea { font: inherit; color: inherit; margin: 0; padding: 0; border: 0; border-radius: 0; background: none; outline: 0; min-width: 0; white-space: nowrap; }
select { appearance: none; width: 100%; height: 100%; }
h1, h2, h3, ol { margin: 0; padding: 0; }
svg { display: block; flex: none; }

.bar { display: flex; align-items: center; height: 18px; flex: none; gap: 2px; padding: 0 2px; font: bold 11px/18px "DejaVu Sans Condensed", "DejaVu Sans", sans-serif; }
.bar h1, .bar h2 { font: inherit; flex: 1; overflow: hidden; white-space: nowrap; }
.idle { background: linear-gradient(90deg, #808080, #c0c0c0); color: #d8d4cc; }
.live { background: linear-gradient(90deg, #0a246a, #a6caf0); color: #fff; }
.logo, .plogo { width: 16px; height: 16px; }
.wb { display: flex; }
.wb button { width: 16px; height: 14px; display: grid; place-items: center; background: #d4d0c8; border: 1px solid; border-color: #fff #404040 #404040 #fff; }
.wb svg { width: 12px; height: 10px; }
.wb .gap { margin-left: 2px; }

.editor { height: 100%; display: flex; flex-direction: column; background: #000; }
.head { flex: none; height: 57px; display: flex; align-items: center; margin-left: 1px; background: #9bdbdb; border: 2px solid #d0ffff; border-top-color: #b0e8e8; box-shadow: inset 0 -2px #5c9090; padding: 0 2px 2px 13px; }
.menu { display: flex; gap: 18px; font: bold 14px/20px "Liberation Serif", serif; flex: 1; }
.menu u { text-underline-offset: 4px; }
.brand { font: italic bold 30px/30px "Liberation Sans", sans-serif; color: #08087c; margin-right: 5px; }
.product { display: flex; flex-direction: column; align-items: center; font-family: "Liberation Serif", serif; margin-right: 4px; }
.product strong { font-size: 24px; line-height: 28px; }
.product em { font-size: 14px; line-height: 22px; }
.date { font-style: italic; line-height: 15px; text-align: center; align-self: flex-start; padding-top: 4px; }

.work { flex: 1; display: flex; min-height: 0; }
.side { width: 154px; margin-left: 1px; flex: none; display: flex; flex-direction: column; background: #52ceae; border-right: 2px solid #a8efd9; border-left: 1px solid #2a6d5d; padding: 3px 1px 2px 1px; margin-bottom: 1px; }
.info { height: 19px; line-height: 18px; background: #9bdbdb; border: 1px solid #000; padding-left: 2px; }
.frame { border: 1px solid #000; padding: 2px; background: #52ceae; }
.side .frame { height: 28px; margin-top: 2px; flex: none; }
.btn { display: flex; align-items: center; justify-content: center; width: 100%; height: 100%; background: #9bdbdb; border: 2px solid; border-color: #ccffff #4d8080 #4d8080 #ccffff; }
.wide { justify-content: flex-start; padding-left: 2px; }
.layers { display: flex; flex-direction: column; gap: 3px; width: 123px; margin: 5px 0 0 2px; padding: 1px 2px 9px 1px; border: 1px solid #000; box-shadow: 2px 2px #a8efd9; font-size: 12px; line-height: 14px; }
.group { background: #000; padding: 2px; display: flex; flex-direction: column; gap: 2px; margin-right: 1px; }
.layer { display: grid; grid-template-columns: 14px 14px 1fr; gap: 2px; height: 14px; }
.layer input { appearance: none; width: 14px; height: 14px; border: 2px solid #fff; background: #fff; box-shadow: inset 0 0 0 2px #000; }
.layer input.on { border-color: #00c; }
.red { background: #f00; }
.leaf { background: #469600; }
.name { background: #9bdbdb; display: flex; align-items: center; justify-content: space-between; padding: 0 2px 0 1px; }
.name.white { background: #fff; }
.name.green { background: #00a67c; }
.name.amber, .amber { background: #ffc64a; }
.name.steel { background: #9cb6c0; }
.name.grey { background: #d8d8d8; }
.selected { margin-top: auto; height: 21px; line-height: 18px; background: #ffc64a; border: 1px solid #000; padding-left: 2px; font-size: 12px; box-shadow: 0 -3px #52ceae, 0 -4px #a8efd9; }
.canvas { flex: 1; min-width: 0; overflow: hidden; }
.canvas svg { width: 100%; height: 100%; }
.right { width: 164px; flex: none; display: flex; flex-direction: column; }
.tools { display: grid; grid-template-columns: repeat(4, 38px); gap: 2px; background: #000; border: 3px solid #2a6d5d; border-right-color: #a8efd9; border-bottom-color: #a8efd9; }
.tool { width: 38px; height: 38px; display: grid; place-items: center; background: #9bdbdb; border: 2px solid; border-color: #ccffff #4d8080 #4d8080 #ccffff; }
.tool.alert { box-shadow: inset 0 0 0 2px #d81818; }
.tool text { font-family: "DejaVu Sans Mono", monospace; font-weight: bold; }
.overview { flex: 1; display: flex; align-items: flex-end; border-right: 2px solid #a8efd9; border-bottom: 2px solid #a8efd9; padding-bottom: 82px; }
.red-box { width: 100%; height: 112px; background: #f00; border-block: 1px solid #800; padding: 3px 8px 3px 0; }
.red-box i { display: block; height: 100%; border: 2px solid #40d8d8; border-right-color: #aaa; }
.coords { height: 43px; flex: none; background: #52ceae; border-top: 1px solid #2a6d5d; border-bottom: 2px solid #a8efd9; display: flex; flex-direction: column; justify-content: center; align-items: flex-end; padding-right: 15px; line-height: 15px; }

.entry { flex: none; height: 34px; display: flex; padding: 1px 0 1px 2px; gap: 1px; background: #000; }
.cream, .xy, .xyin { background: #ffffca; }
.cream { width: 31px; display: grid; place-items: center; box-shadow: inset 0 0 0 2px #ffffca, inset 0 0 0 3px #b0b088; }
.cream svg { fill: none; stroke: #000; }
.cream.sel { width: 29px; box-shadow: inset 0 0 0 2px #52ceae, inset 0 0 0 4px #b0b088; }
.xy { width: 46px; padding-right: 6px; display: grid; place-items: center; font-size: 12px; }
.xyin { flex: 1; position: relative; border: 2px solid #ffffca; box-shadow: inset 2px 2px #9a9a78, inset -2px -2px #d8d8b0; }
.xyin input { width: 100%; height: 100%; padding-left: 12px; }
.unit { width: 78px; background: #52ceae; padding: 2px 3px 2px 5px; font-size: 12px; margin-right: 1px; }
.message { flex: none; height: 31px; background: #4d8080; padding: 2px 1px 1px 2px; }
.message div { height: 100%; border: 1px solid #000; background: #b0ffff; box-shadow: inset 3px 3px #dfffff, inset -3px -3px #9bdbdb, inset -4px -4px #4d8080; }
.strip { flex: none; height: 4px; background: #d4d0c8; border-top: 1px solid #fff; position: relative; z-index: 9; }

.opt { position: relative; height: 100%; border: 2px solid; }
.opt i { position: absolute; right: 6px; top: 50%; width: 12px; height: 6px; margin-top: -3px; border: 2px solid; pointer-events: none; }
.opt select { padding-left: 4px; display: block; }
.aquaopt { background: #9bdbdb; }
.aquaopt, .aquaopt i { border-color: #ccffff #4d8080 #4d8080 #ccffff; }
.greenopt { background: #52ceae; }
.greenopt, .greenopt i { border-color: #a8efd9 #2a6d5d #2a6d5d #a8efd9; }
.creamopt, .creamopt i { border-color: #d0d0a6 #9a9a78 #9a9a78 #d0d0a6; }
.inp { position: relative; flex: 1; height: 100%; border: 2px solid; border-color: #4d8080 #ccffff #ccffff #4d8080; display: flex; min-width: 0; }
.inp input { width: 100%; height: 17px; padding-left: 5px; }
.beam { position: absolute; left: 4px; top: 2px; height: 14px; width: 3px; pointer-events: none; background: linear-gradient(90deg, transparent 1px, #000 1px, #000 2px, transparent 2px); border-block: 1px dotted #000; -webkit-mask: repeating-linear-gradient(#000 0 1px, transparent 1px 2px); mask: repeating-linear-gradient(#000 0 1px, transparent 1px 2px); }
.inp .beam { left: 3px; }
.inp .beam + input { padding-left: 4px; }

.win { position: absolute; border: 1px solid #404040; border-top-color: #d4d0c8; border-left-color: #d4d0c8; box-shadow: inset 1px 1px #fff, inset -1px -1px #808080; background: #d4d0c8; padding: 2px; display: flex; flex-direction: column; }
.measure { left: calc(100% - 187px); right: -1px; top: 241px; }
.measure .bar { margin-top: 1px; }
.mbody { background: #52ceae; border: 1px solid #000; }
.mbody h3 { font: inherit; line-height: 16px; height: 17px; text-align: center; background: #9bdbdb; border-bottom: 1px solid #000; }
.mbody label { display: flex; align-items: center; height: 29px; background: #9bdbdb; border-bottom: 2px solid #000; border-right: 1px solid #000; padding-left: 8px; white-space: nowrap; }
.mbody label input { appearance: none; width: 8px; height: 8px; background: #4d8080; transform: rotate(45deg); margin-right: 8px; flex: none; }
.mclose { padding-top: 31px; }
.mclose .frame { height: 29px; border-width: 1px 0 0; padding: 3px; }
.mclose .btn { justify-content: flex-start; padding-left: 64px; }

.ppt { left: 283px; right: 78px; top: 290px; bottom: 3px; padding-bottom: 0; font: 12px/16px "Liberation Sans", "Noto Sans CJK SC", sans-serif; }
.pmenu, .ptools { display: flex; align-items: center; flex: none; background: #e4e1dc; }
.pmenu { height: 25px; gap: 7px; padding-left: 5px; background: linear-gradient(90deg, #d4d0c8, #f5f4f2 60%); }
.pmenu button + button { margin-left: 5px; }
.grip { width: 3px; height: 15px; background: repeating-linear-gradient(#a09c94 0 2px, transparent 2px 4px); flex: none; }
.help { margin-left: auto; width: 162px; height: 18px; background: #fff; padding-left: 0; }
.help::placeholder { color: #777; opacity: 1; }
.drop { width: 0; height: 0; border: 3px solid transparent; border-top-color: #000; border-bottom: 0; }
.pmenu .x { margin: 0 5px 0 0; }
.ptools { height: 26px; justify-content: space-between; background: #d4d0c8; }
.ptools.second { background: linear-gradient(90deg, #d4d0c8 15%, #f4f3f1 30%); }
.strip1 { display: flex; align-items: center; gap: 8px; height: 24px; padding-left: 5px; background: linear-gradient(#f8f7f5, #dcd9d2); }
.strip1 button { display: flex; align-items: center; gap: 3px; }
.strip1.end { flex: 1; justify-content: flex-end; gap: 7px; }
.sep { width: 1px; height: 16px; background: #a8a49c; }
.more { width: 12px; height: 24px; background: #808080; border-radius: 0 3px 3px 0; display: grid; align-content: end; justify-items: center; padding-bottom: 3px; }
.more::before { content: ""; width: 6px; height: 1px; background: #fff; margin-bottom: 1px; }
.more::after { content: ""; border: 3px solid transparent; border-top-color: #000; border-bottom: 0; }
.pbody { flex: 1; display: flex; min-height: 0; }
.outline { width: 168px; flex: none; display: flex; flex-direction: column; background: #fff; }
.tabs { height: 19px; background: #d4d0c8; display: flex; flex: none; line-height: 18px; }
.tabs button { padding: 0 10px 0 18px; }
.tabs .act { background: #fff; font-weight: bold; padding: 0 8px 0 0; border-top: 1px solid #fff; }
.thumbs { list-style: none; flex: 1; overflow: hidden; padding-top: 4px; }
.thumbs li { display: flex; margin-bottom: 4px; }
.thumbs b { width: 19px; padding: 8px 0 0 7px; font: bold 13px/16px "Liberation Sans", sans-serif; flex: none; }
.thumb { border: 4px solid #fff; flex: none; width: 144px; height: 110px; }
.thumb svg { width: 136px; height: 102px; border: 1px solid #000; }
.cur .thumb { border-color: #808080; }
.views { display: flex; height: 13px; flex: none; background: #d4d0c8; align-items: stretch; }
.views button { width: 15px; display: grid; place-items: center; overflow: hidden; }
.views .on { border: 1px solid #0a246a; }
.trk { flex: 1; background: #ebe9e4; border-left: 1px solid #404040; }
.sb { width: 16px; height: 16px; flex: none; display: grid; place-items: center; background: #d4d0c8; border: 1px solid; border-color: #fff #606060 #606060 #fff; }
.views .sb { height: auto; }
.up::after, .down::after, .left::after, .rightb::after { content: ""; border: 4px solid transparent; }
.up::after { border-bottom-color: #000; border-top: 0; }
.down::after { border-top-color: #000; border-bottom: 0; }
.left::after { border-right-color: #777; border-left: 0; }
.rightb::after { border-left-color: #777; border-right: 0; }
.dim.up::after { border-bottom-color: #888; }
.dim.down::after { border-top-color: #888; }
.stage { flex: 1; margin-left: 4px; display: flex; flex-direction: column; min-width: 0; }
.slidearea { flex: 1; display: flex; background: #d4d0c8; min-height: 0; }
.slidewrap { flex: 1; min-width: 0; background: #808080; padding: 0 82px 13px 82px; display: flex; overflow: hidden; }
.slide { flex: 1; min-width: 0; background: #fff; border-left: 1px solid #000; box-shadow: 5px 5px #000; }
.slide svg { width: 100%; height: 100%; overflow: visible; font-family: "Liberation Sans", "Noto Sans CJK SC", sans-serif; }
.keep { white-space: pre; }
.unitmm { font-family: "Open Sans", sans-serif; }
.vscroll { width: 16px; flex: none; display: flex; flex-direction: column; }
.track { flex: 1; background: #ebe9e4; }
.slidearea .track { padding-top: 163px; }
.slidearea .vscroll { padding-bottom: 17px; }
.thumbbar { height: 92px; background: #d4d0c8; border: 1px solid; border-color: #fff #606060 #606060 #fff; }
.dbl { height: 14px; border-color: transparent; }
.notes { height: 61px; flex: none; display: flex; border-top: 5px solid #d4d0c8; background: #fff; }
.notes textarea { flex: 1; resize: none; padding: 4px 3px; border-top: 1px solid #808080; font-size: 13px; }

.drill { left: 394px; right: 273px; top: 1px; padding: 2px 3px; }
.dbody { background: #52ceae; }
.drow { display: flex; }
.cell { border: 1px solid #000; padding: 2px; display: flex; align-items: center; flex: none; white-space: pre; }
.aqua { background: #9bdbdb; }
.grow { flex: 1; }
.r1 { height: 35px; padding-top: 1px; }
.r2 { height: 30px; margin-top: -1px; }
.w168 { width: 168px; }
.w109 { width: 109px; }
.w187 { width: 187px; }
.w307 { width: 307px; }
.w104 { max-width: 104px; margin: 0 2px 0 14px; }
.w176 { width: 176px; }
.w128 { width: 128px; }
.w60 { width: 60px; }
.w35 { width: 35px; }
.w50 { width: 50px; }
.w30 { width: 30px; }
.w88 { width: 88px; }
.w115 { width: 115px; }
.w130 { width: 131px; }
.w362 { width: 361px; }
.w58 { width: 58px; }
.w41 { width: 41px; font-size: 12px; }
.space151 { flex: 0 0 150px; }
.space3 { flex: 0 0 3px; }
.spread { justify-content: space-between; padding: 0 13px 0 0; }
.w187 label { padding: 0 8px; }
.yes { flex: 1; }
.yes select { padding-left: 29px; }
.sheet { display: grid; grid-template-columns: 1fr 16px; column-gap: 4px; padding: 1px 1px 6px 2px; }
.tframe { border: 2px solid; border-color: #2a6d5d #a8efd9 #a8efd9 #2a6d5d; }
table { width: 100%; table-layout: fixed; border-spacing: 2px; background: #000; }
td { height: 31px; padding: 0; background: #52ceae; }
.c0 { width: 24px; }
.c1 { width: 66px; }
.c2 { width: 58px; }
.c3 { width: 67px; }
.c4 { width: 113px; }
.c5, .c8 { width: 81px; }
.c6, .c7 { width: 72px; }
.c9 { width: 82px; }
.sym svg { margin-left: 2px; }
.sym text { font: bold 8px "Liberation Mono", monospace; }
.gbtn { display: block; width: 62px; height: 27px; margin-left: 2px; text-align: left; padding-left: 1px; border: 2px solid; border-color: #a8efd9 #2a6d5d #2a6d5d #a8efd9; }
.gbtn.hot { background: #ffc64a; }
.num { text-align: right; padding-right: 3px; }
td.cr { background: #ffffca; }
td.wh { background: #fff; }
td .opt { height: 27px; margin: 0 3px 0 6px; }
td .opt select { padding-left: 3px; }
td .inp { height: 27px; margin: 0 2px; }
.cr .inp { border-color: #9a9a78 #d0d0a6 #d0d0a6 #9a9a78; }
.wh .inp { border-color: #989898 #ccc #ccc #989898; }
td.focus { box-shadow: inset 0 0 0 2px #000; }
.mvs { display: flex; flex-direction: column; align-items: center; background: #40ae94; border: 2px solid; border-color: #2a6d5d #a8efd9 #a8efd9 #2a6d5d; }
.mtrack { flex: 1; width: 100%; display: flex; align-items: flex-end; }
.mthumb { width: 100%; height: 36%; background: #52ceae; border: 2px solid; border-color: #a8efd9 #2a6d5d #2a6d5d #a8efd9; }
.mhs { margin-top: 4px; height: 15px; display: flex; align-items: center; background: #40ae94; border: 2px solid; border-color: #2a6d5d #a8efd9 #a8efd9 #2a6d5d; }
.htrack { flex: 1; height: 100%; }
.hthumb { height: 100%; width: 91%; background: #52ceae; border: 2px solid; border-color: #a8efd9 #2a6d5d #2a6d5d #a8efd9; }
.nav { height: 34px; border: 1px solid #000; border-inline-width: 0; }
.nav .cell { border-block-width: 0; }
.nav .cell.grow { border-inline-width: 0; }
.nav .idx { width: 124px; border-color: transparent; }
.idx label { padding-right: 6px; }
.ginp { border-color: #2a6d5d #a8efd9 #a8efd9 #2a6d5d; }
.nav svg { fill: none; stroke: #000; }
.po { padding-left: 6px; }
.po .opt { flex: 1; }
.po .opt select { padding-left: 2px; }
.merge { height: 34px; margin-top: 4px; }
.w362 label { padding: 0 18px 0 8px; }
.upd { flex: 1; }
.upd select { padding-left: 3px; }
.acts { height: 31px; margin-top: -1px; }

.marks { position: absolute; inset: 0; width: 100%; height: 100%; pointer-events: none; }
.box, .arrow { filter: drop-shadow(2px 3px 2px rgba(0, 0, 0, .55)); }
</style>
